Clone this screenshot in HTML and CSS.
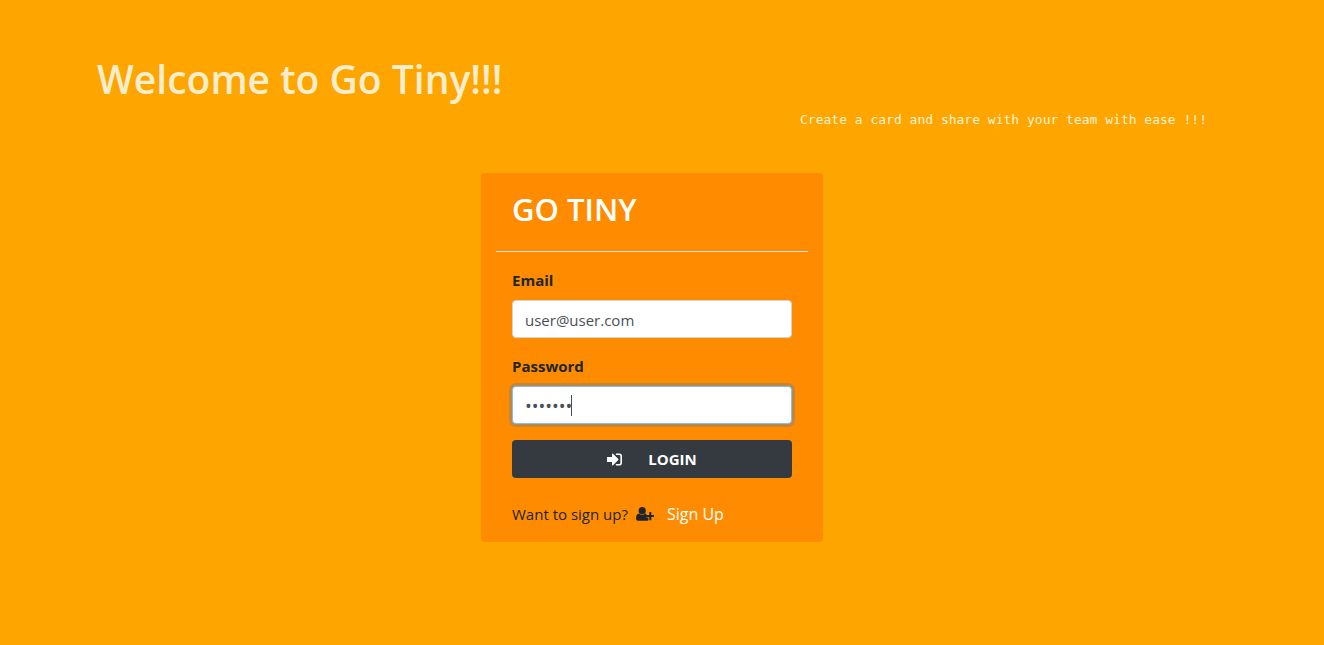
FILE: index.html
```html
<!DOCTYPE html>
<html lang="en">
<head>
<meta charset="utf-8">
<meta name="viewport" content="width=device-width, initial-scale=1">
<title>Go Tiny</title>
<link rel="stylesheet" href="styles.css">
</head>
<body>
<div class="container">
  <header class="intro">
    <h1 class="intro-title">Welcome to Go Tiny!!!</h1>
    <p class="intro-tagline">Create a card and share with your team with ease !!!</p>
  </header>
  <main class="card">
    <h2 class="card-title">GO TINY</h2>
    <form class="login">
      <div class="field">
        <label class="label" for="email">Email</label>
        <input class="input" id="email" type="email" value="user@user.com">
      </div>
      <div class="field">
        <label class="label" for="password">Password</label>
        <div class="password">
          <input class="input" id="password" type="password" value="1234567" autofocus>
          <span class="caret"></span>
        </div>
      </div>
      <button class="button" type="submit">
        <svg class="icon-login" viewBox="0 0 15 13" aria-hidden="true">
          <path fill="currentColor" d="M0 4.600q0-.6.6-.6H5V1.100q0-.6.5-.6.3 0 .5.2l5.300 5.200q.4.6 0 1.200L6 12.300q-.2.2-.5.2-.5 0-.5-.6V9H.6Q0 9 0 8.400z"/>
          <path fill="none" stroke="currentColor" stroke-width="1.600" stroke-linecap="round" d="M9.500 1.200h2.700q2 0 2 2v6.600q0 2-2 2H9.500"/>
        </svg>
        <span>LOGIN</span>
      </button>
      <p class="signup">
        <span class="signup-text">Want to sign up?</span>
        <svg class="icon-user" viewBox="0 0 18 14" aria-hidden="true">
          <circle cx="6.200" cy="3.700" r="3.600" fill="currentColor"/>
          <path fill="currentColor" d="M3 6.500q1.400 1.300 3.200 1.300T9.400 6.500q.5 0 .9.200v3.900h2.100v2.700q-.6.500-1.500.5H2.200Q0 13.800 0 11.500q0-4.600 3-5zM13.300 5h2v3h3v2h-3v3.200h-2V10h-3V8h3z"/>
        </svg>
        <a class="signup-link" href="#signup">Sign Up</a>
      </p>
    </form>
  </main>
</div>
</body>
</html>
```
FILE: styles.css
```css
* {
  box-sizing: border-box;
}

body {
  margin: 0;
  padding: 55px 20px 56px 0;
  background: #ffa500;
  color: #212529;
  font: 16px/24px "Segoe UI", "Open Sans", "Noto Sans", sans-serif;
}

.container {
  max-width: 1140px;
  margin: 0 auto;
}

.intro {
  padding: 0 15px;
  margin-bottom: 43px;
}

.intro-title {
  margin: 0 0 7px;
  color: #f5edcb;
  font-size: 39px;
  line-height: 48px;
  font-weight: 600;
}

.intro-tagline {
  margin: 0;
  color: #fff3d6;
  font: 13px/20px "DejaVu Sans Mono", monospace;
  text-align: right;
}

.card {
  width: 30%;
  min-width: 320px;
  margin: 0 auto;
  padding: 0 15px 16px;
  border-radius: 4px;
  background: #ff8c00;
}

.card-title {
  margin: 0;
  padding: 16px 16px 22px;
  border-bottom: 1px solid #dee2e6;
  color: #fff;
  font-size: 31px;
  line-height: 40px;
  font-weight: 600;
}

.login {
  padding: 16px 16px 0;
}

.field {
  margin-bottom: 16px;
}

.label {
  display: block;
  margin-bottom: 8px;
  font-size: 15px;
  font-weight: 700;
}

.input {
  display: block;
  width: 100%;
  height: 38px;
  padding: 7px 12px 5px;
  border: 1px solid #ced4da;
  border-radius: 4px;
  background: #fff;
  color: #495057;
  font: inherit;
  font-size: 15px;
}

.input:focus {
  border-color: #80bdff;
  outline: 0;
  box-shadow: 0 0 0 3px rgba(0, 123, 255, 0.25);
  caret-color: transparent;
}

.password {
  position: relative;
}

.password .input {
  font-size: 18px;
}

.caret {
  position: absolute;
  top: 9px;
  left: 59px;
  width: 1px;
  height: 21px;
  background: #495057;
}

.button {
  display: flex;
  align-items: center;
  justify-content: center;
  gap: 26px;
  width: 100%;
  height: 38px;
  border: 0;
  border-radius: 4px;
  background: #343a40;
  color: #fff;
  font: inherit;
  font-size: 15px;
  font-weight: 700;
}

.icon-login {
  width: 15px;
  height: 13px;
}

.signup {
  display: flex;
  align-items: center;
  margin: 24px 0 0;
}

.signup-text {
  font-size: 15px;
}

.icon-user {
  width: 18px;
  height: 14px;
  margin: 0 13px 0 8px;
}

.signup-link {
  color: #fff;
  text-decoration: none;
}
```
